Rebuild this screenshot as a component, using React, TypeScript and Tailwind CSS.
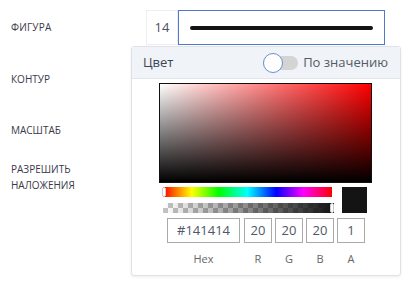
import React from 'react';

const checker =
  'repeating-conic-gradient(#c4c4c4 0% 25%, #ffffff 0% 50%) 0 0 / 10px 10px';

const channels = [
  { value: '20', label: 'R' },
  { value: '20', label: 'G' },
  { value: '20', label: 'B' },
  { value: '1', label: 'A' },
];

export default function App() {
  return (
    <div className="relative w-[407px] h-[282px] bg-white overflow-hidden font-['Open_Sans',sans-serif]">
      {/* Form rows */}
      <div className="flex flex-col pl-[11px] pt-[10px]">
        <div className="flex items-center h-[35px]">
          <span className="w-[135px] text-[10px] text-[#3a3a4a] tracking-[0.2px]">ФИГУРА</span>
          <div className="flex h-[35px]">
            <div className="w-[32px] border border-[#eeeeee] flex items-center justify-center text-[13px] text-[#4a5060]">
              14
            </div>
            <div className="w-[207px] border border-[#4f7ac7] flex items-center px-[11px]">
              <div className="h-[4px] w-full rounded-full bg-[#141414]" />
            </div>
          </div>
        </div>
        <div className="flex flex-col gap-[35px] pt-[26px]">
          <span className="text-[10px] text-[#3a3a4a] leading-[16px]">КОНТУР</span>
          <span className="text-[10px] text-[#3a3a4a] leading-[16px]">МАСШТАБ</span>
          <span className="text-[10px] text-[#3a3a4a] leading-[16px] -mt-[12px]">
            РАЗРЕШИТЬ
            <br />
            НАЛОЖЕНИЯ
          </span>
        </div>
      </div>

      {/* Color picker popup */}
      <div className="absolute left-[131px] top-[46px] w-[270px] h-[230px] bg-white border border-[#dfe3e8] rounded-[3px] shadow-[0_1px_3px_rgba(0,0,0,0.08)]">
        <div className="h-[32px] bg-[#f0f3f7] border-b border-[#e2e6eb] flex items-center justify-between pl-[11px] pr-[12px]">
          <span className="text-[13px] text-[#3b4656]">Цвет</span>
          <div className="flex items-center gap-[5px]">
            <div className="relative w-[35px] h-[20px] flex items-center">
              <div className="w-full h-[14px] rounded-full bg-[#d4d4d4]" />
              <div className="absolute left-0 top-0 w-[20px] h-[20px] rounded-full bg-white border border-[#6b8fcf]" />
            </div>
            <span className="text-[13px] text-[#555b66]">По значению</span>
          </div>
        </div>

        <div className="flex flex-col items-start pl-[27px] pt-[4px]">
          {/* saturation / value area */}
          <div
            className="w-[213px] h-[100px] border border-[#111]"
            style={{
              background:
                'linear-gradient(to top, #000, rgba(0,0,0,0)), linear-gradient(to right, #fff, #ff0000)',
            }}
          />
          <div className="flex gap-[8px] mt-[4px] pl-[4px]">
            <div className="flex flex-col gap-[6px]">
              <div
                className="relative w-[169px] h-[10px]"
                style={{
                  background:
                    'linear-gradient(to right, #f00 0%, #ff0 17%, #0f0 33%, #0ff 50%, #00f 67%, #f0f 83%, #f00 100%)',
                }}
              >
                <div className="absolute -left-[1px] top-0 w-[4px] h-[10px] bg-white rounded-[2px] border border-[#ccc]" />
              </div>
              <div className="relative w-[171px] h-[10px]" style={{ background: checker }}>
                <div className="absolute inset-0 bg-gradient-to-r from-[rgba(20,20,20,0)] to-[#141414]" />
                <div className="absolute right-0 top-0 w-[4px] h-[10px] bg-white rounded-[2px] border border-[#ccc]" />
              </div>
            </div>
            <div className="w-[25px] h-[26px] bg-[#141414]" />
          </div>

          {/* inputs */}
          <div className="flex gap-[3px] mt-[5px] ml-[8px]">
            <div className="w-[73px] h-[25px] border border-[#aaaaaa] flex items-center justify-center text-[13px] text-[#4f5866] mr-[1px]">
              #141414
            </div>
            {channels.map((c, i) => (
              <div
                key={i}
                className="w-[28px] h-[25px] border border-[#aaaaaa] flex items-center justify-center text-[13px] text-[#4f5866]"
              >
                {c.value}
              </div>
            ))}
          </div>
          <div className="flex gap-[3px] mt-[9px] ml-[8px] text-[11px] text-[#666] leading-[13px]">
            <span className="w-[73px] text-center mr-[1px]">Hex</span>
            {channels.map((c) => (
              <span key={c.label} className="w-[28px] text-center">{c.label}</span>
            ))}
          </div>
        </div>
      </div>
    </div>
  );
}
